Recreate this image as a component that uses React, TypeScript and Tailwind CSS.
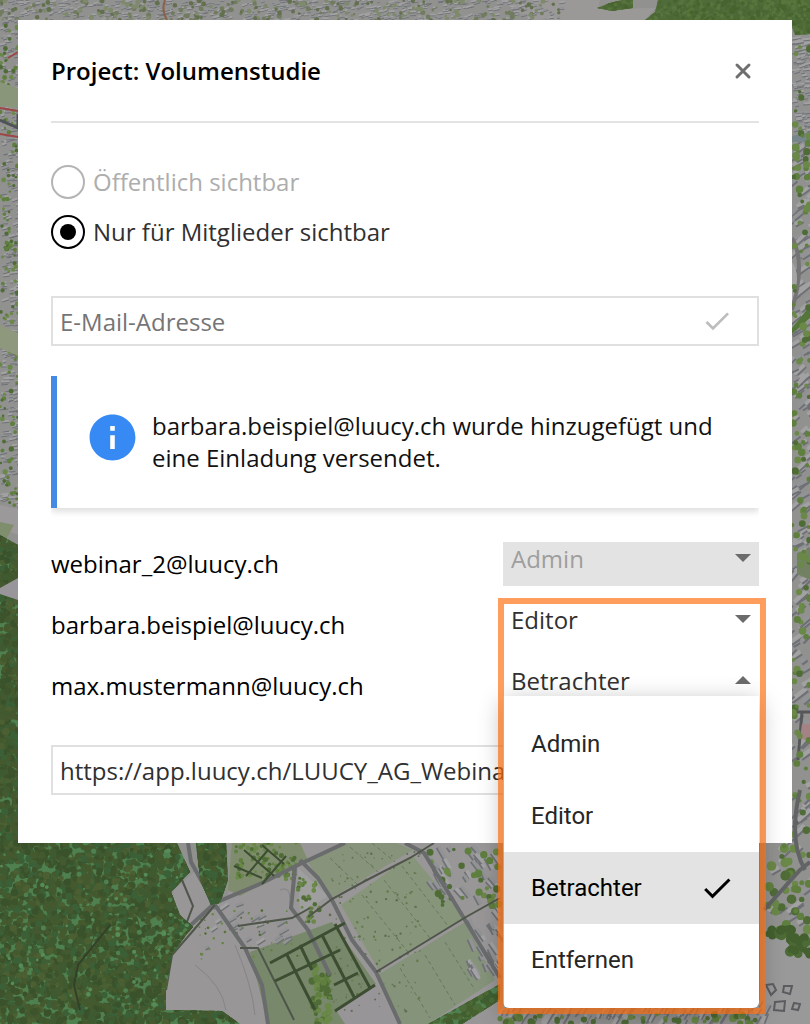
import { useState } from "react";
import { MdCheck, MdInfo } from "react-icons/md";

const ROLES = ["Admin", "Editor", "Betrachter", "Entfernen"];

const MEMBERS = [
  { email: "webinar_2@luucy.ch", role: "Admin", disabled: true },
  { email: "barbara.beispiel@luucy.ch", role: "Editor", disabled: false },
  { email: "max.mustermann@luucy.ch", role: "Betrachter", disabled: false, open: true },
];

// seeded random numbers, so that the map looks the same on every render
function createRandom(seed: number) {
  let s = seed;
  return () => {
    s = (s * 16807) % 2147483647;
    return s / 2147483647;
  };
}

type AreaProps = { x: number; y: number; w: number; h: number; count: number; seed: number };

function Trees({ x, y, w, h, count, seed, r = 3, colors }: AreaProps & { r?: number; colors: string[] }) {
  const rnd = createRandom(seed);
  return (
    <g>
      {Array.from({ length: count }, (_, i) => (
        <circle
          key={i}
          cx={(x + rnd() * w).toFixed(1)}
          cy={(y + rnd() * h).toFixed(1)}
          r={(r * (0.6 + rnd() * 0.7)).toFixed(1)}
          fill={colors[Math.floor(rnd() * colors.length)]}
        />
      ))}
    </g>
  );
}

function Houses({ x, y, w, h, count, seed, size = 7, angle = -20 }: AreaProps & { size?: number; angle?: number }) {
  const rnd = createRandom(seed);
  return (
    <g>
      {Array.from({ length: count }, (_, i) => {
        const cx = Math.round(x + rnd() * w);
        const cy = Math.round(y + rnd() * h);
        const len = size * (0.5 + rnd());
        // the dark bar is the shadow, the light one the roof
        return (
          <g key={i} transform={`translate(${cx} ${cy}) rotate(${Math.round(angle + rnd() * 20)})`}>
            <rect width={len} height={size / 4} fill="#6e7075" />
            <rect y={-size / 4} width={len} height={size / 3} fill={rnd() > 0.5 ? "#a2a2a3" : "#929394"} />
          </g>
        );
      })}
    </g>
  );
}

const FOREST = ["#3d532b", "#445a2e", "#4b5f32", "#3f5a30", "#3a522c", "#44592f", "#3b6038"];
const LEAVES = ["#5f7f3f", "#6a8848", "#4f6c37"];

function MapBackground() {
  return (
    <svg
      className="absolute inset-0 h-full w-full"
      viewBox="0 0 810 1024"
      preserveAspectRatio="xMidYMin slice"
      aria-hidden="true"
    >
      <defs>
        <clipPath id="forest">
          <path d="M0 535 18 545V843H177L190 872 171 892 180 915 193 927 186 935 172 955 166 990V1010L222 1011 240 1024H0Z" />
          <path d="M196 843H226L228 880 220 903 211 905 200 880Z" />
          <path d="M428 1024 500 984V1000L462 1024Z" />
        </clipPath>
        <clipPath id="wood">
          <path d="M645 20 655 12 658 0H810V34L795 35 790 20Z" />
          <path d="M597 8 610 3 622 0H633V8L612 11Z" />
        </clipPath>
      </defs>
      <rect width="810" height="1024" fill="#919190" />

      {/* town along the top */}
      <path d="M500 0 600 0 598 9 655 8 645 20H530Z" fill="#9b9898" />
      <Houses x={0} y={0} w={560} h={22} count={620} seed={11} size={5} />
      <Trees x={0} y={0} w={560} h={22} count={240} seed={5} r={2} colors={["#717c5f", "#62704e", "#7f8a6c"]} />
      <path d="M165 0Q161 10 167 20" stroke="#8c6048" strokeWidth="2" fill="none" />
      <g clipPath="url(#wood)">
        <rect x="590" width="220" height="40" fill="#506c39" />
        <Trees x={590} y={0} w={220} h={40} count={900} seed={7} r={2} colors={["#47642f", "#59753e", "#4c6835"]} />
      </g>

      {/* left edge */}
      <Houses x={0} y={20} w={18} h={510} count={330} seed={21} size={6} />
      <Trees x={0} y={20} w={18} h={500} count={150} seed={9} r={2} colors={LEAVES} />
      <path d="M0 82 18 88V108L0 106Z" fill="#89967a" />
      <path d="M0 108 18 111M0 134 18 137M8 58 18 52" stroke="#9e4645" strokeWidth="2" />
      <path d="M0 120 18 128 18 114" stroke="#50535a" strokeWidth="3" fill="none" />
      <path d="M0 325 18 333V356L0 348Z" fill="#8d987c" />
      <path d="M0 505 18 509V535L0 528Z" fill="#9b9999" />
      <path d="M0 522 14 525 4 543H0Z" fill="#7f8f6d" />

      {/* right edge */}
      <Houses x={792} y={36} w={18} h={100} count={110} seed={31} size={6} />
      <Houses x={788} y={136} w={22} h={420} count={150} seed={32} size={11} angle={-45} />
      <Houses x={768} y={560} w={42} h={380} count={90} seed={33} size={13} angle={-50} />
      <path d="M792 136 810 132V142H792Z" fill="#76868b" />
      <path d="M792 238Q806 262 792 310" stroke="#747476" strokeWidth="4" fill="none" />
      <path d="M792 262Q802 275 792 300Z" fill="#a5a5a5" />
      <path d="M792 328 810 306V318L792 334Z" fill="#55763a" />
      <path d="M797 553 810 548V580L797 574Z" fill="#718162" />
      <path d="M792 712H810M802 712 798 760" stroke="#55575b" strokeWidth="3" />
      <path d="M802 724H810V742L800 738Z" fill="#a38383" />
      <Trees x={792} y={36} w={18} h={800} count={130} seed={34} r={3} colors={LEAVES} />
      <Trees x={768} y={845} w={42} h={100} count={40} seed={35} r={4} colors={LEAVES} />
      <path d="M764 910 800 870 810 862M800 790Q788 840 805 870" stroke="#626365" strokeWidth="4" fill="none" />
      <path d="M760 935Q785 925 797 948L810 960V1024H760Z" fill="#9a999a" />
      <Trees x={768} y={928} w={24} h={8} count={16} seed={36} r={4} colors={["#44602f", "#4c6b36"]} />
      <Trees x={790} y={936} w={20} h={18} count={28} seed={37} r={4} colors={["#44602f", "#4c6b36"]} />
      <g fill="none" stroke="#5b5c60" strokeWidth="2">
        <path d="M766 985 773 984 776 990 771 995ZM784 986 792 986 790 994 783 992ZM775 1002 785 1001 784 1011 774 1010ZM794 1003 800 1004 798 1010 792 1009Z" />
      </g>

      {/* open land below the forest */}
      <path d="M174 890 196 870 235 843H500V1024H160Z" fill="#989696" />
      <path d="M188 843H238L228 895 214 905Z" fill="#8e918c" />
      <path d="M228 890 232 843H300L308 860 240 896Z" fill="#7f8d6e" />
      <path d="M308 862 345 843H396L413 850 331 898Z" fill="#87937a" />
      <path d="M341 905 412 855 464 918 378 969Z" fill="#87967a" />
      <path d="M378 975 465 922 495 980 428 1024H398Z" fill="#85937a" />
      <path d="M250 952 332 922 376 984 336 1010 350 1024H268Z" fill="#78886a" />
      <path d="M336 1010 377 986 396 1024H345Z" fill="#979597" />
      <path d="M298 868 328 896 300 914Z" fill="#a09f9f" />
      <g stroke="#6a7661" strokeWidth="1" strokeDasharray="4 3">
        <path d="M330 858 358 885M350 847 378 872M372 843 395 862M362 895 408 952M384 880 430 938M402 866 448 926M400 968 430 1018M425 955 455 1005M445 942 475 990" />
      </g>
      <Trees x={330} y={850} w={90} h={165} count={150} seed={41} r={1} colors={["#667a4f", "#5d6f50"]} />

      <Houses x={428} y={846} w={68} h={50} count={35} seed={51} size={10} angle={45} />
      <Houses x={468} y={905} w={30} h={65} count={32} seed={52} size={10} angle={50} />
      <Houses x={205} y={905} w={85} h={45} count={24} seed={53} size={8} angle={-40} />
      <Trees x={430} y={846} w={70} h={60} count={35} seed={54} r={3} colors={LEAVES} />
      <Trees x={236} y={843} w={60} h={36} count={85} seed={55} r={2} colors={LEAVES} />
      <Trees x={195} y={910} w={110} h={50} count={50} seed={56} r={1} colors={LEAVES} />
      <Trees x={298} y={878} w={22} h={45} count={35} seed={57} r={2} colors={LEAVES} />
      <Trees x={312} y={965} w={18} h={59} count={50} seed={58} r={3} colors={LEAVES} />

      <g fill="none" stroke="#696b6d" strokeWidth="4">
        <path d="M188 843 191 862 215 905 245 948 262 985 268 1024" />
        <path d="M180 935 215 903 260 884 300 864 345 843" />
        <path d="M300 860 318 878 332 900 352 940 376 972 400 1024" />
        <path d="M405 843 424 853 462 915 500 978" />
        <path d="M295 868 291 908 308 930 330 975" />
      </g>
      <g fill="none" stroke="#4f554a" strokeWidth="2">
        <path d="M308 917 332 899 365 881 410 858 434 843" />
        <path d="M376 972 412 950 466 917 500 898" />
        <path d="M238 926 292 918 310 908M240 948H258L294 1020M215 905 192 932 172 955 166 990" />
        <path d="M182 880 193 906 180 940" />
      </g>
      <g fill="none" stroke="#3c4d31" strokeWidth="3">
        <path d="M270 963 345 923M275 981 340 950M335 924 370 988M322 935 354 997M300 945 312 970M286 953 315 1010M334 985 358 973M335 1011 375 985" />
        <path d="M234 866 262 878M244 850 274 876M262 845 284 864M246 876 268 850M262 884 286 856" strokeWidth="2" />
      </g>
      <g fill="none" stroke="#858486" strokeWidth="1">
        <path d="M195 965Q222 985 226 1010M235 945Q252 985 255 1015M280 890Q290 885 290 900" />
      </g>

      <g clipPath="url(#forest)">
        <rect y="530" width="500" height="494" fill="#4f8150" />
        <Trees x={0} y={530} w={20} h={320} count={750} seed={61} colors={FOREST} />
        <Trees x={0} y={843} w={242} h={181} count={3600} seed={62} colors={FOREST} />
        <Trees x={0} y={850} w={190} h={170} count={90} seed={64} r={2} colors={["#568c57", "#4f8150"]} />
        <Trees x={425} y={980} w={75} h={44} count={240} seed={63} colors={["#46602f", "#4d6b38", "#3f5f31"]} />
      </g>
      <path d="M110 925 78 965 74 985 80 1010" fill="none" stroke="#33402a" strokeWidth="2" />
      <path d="M0 588 18 578V600L0 594Z" fill="#98969a" />

      <Houses x={500} y={1010} w={270} h={16} count={90} seed={71} size={10} angle={-70} />
      <Trees x={500} y={1014} w={260} h={10} count={45} seed={72} r={3} colors={LEAVES} />
    </svg>
  );
}

function CloseIcon() {
  return (
    <svg className="size-6" viewBox="0 0 24 24" fill="none" stroke="currentColor" strokeWidth="3" strokeLinecap="round" aria-hidden="true">
      <path d="M6 6l12 12M18 6 6 18" />
    </svg>
  );
}

function Caret({ up = false }: { up?: boolean }) {
  return (
    <svg
      className="pointer-events-none absolute top-3 right-2 h-2 w-4 fill-[#6b6b6b]"
      viewBox="0 0 16 8"
      aria-hidden="true"
    >
      <path d={up ? "M0 8 8 0l8 8z" : "M0 0h16L8 8z"} />
    </svg>
  );
}

function RoleMenu({ value, onSelect }: { value: string; onSelect: (role: string) => void }) {
  return (
    <div className="absolute inset-x-0 top-8 rounded-b-md bg-white py-3 font-[Roboto,sans-serif] shadow-[0_6px_24px_rgba(0,0,0,0.3)]">
      {ROLES.map((role) => (
        <button
          key={role}
          type="button"
          onClick={() => onSelect(role)}
          className={
            role === value
              ? "flex h-18 w-full items-center justify-between bg-[#e3e3e3] pr-6 pl-7 text-black"
              : "flex h-18 w-full items-center pr-6 pl-7 text-[#262626]"
          }
        >
          {role}
          {role === value && <MdCheck className="size-9" stroke="currentColor" />}
        </button>
      ))}
    </div>
  );
}

export default function App() {
  const [visibility, setVisibility] = useState("members");
  const [roles, setRoles] = useState(MEMBERS.map((m) => m.role));

  const changeRole = (index: number, role: string) => {
    setRoles(roles.map((r, i) => (i === index ? role : r)));
  };

  return (
    <div className="relative min-h-screen overflow-hidden px-[18px] pt-5 font-['Open_Sans',sans-serif] text-2xl text-black">
      <MapBackground />

      <main className="relative bg-white px-[33px] pb-12">
        <header className="flex h-[103px] items-center justify-between border-b-2 border-[#e3e3e3]">
          <h1 className="font-semibold">Project: Volumenstudie</h1>
          <button type="button" aria-label="Schliessen" className="pr-1 text-[#6f6f6f]">
            <CloseIcon />
          </button>
        </header>

        <fieldset className="mt-[42px] space-y-4">
          <label className="flex items-center gap-2 text-[#adadad]">
            <input
              type="radio"
              name="visibility"
              disabled
              className="size-[34px] appearance-none rounded-full border-2 border-[#b4b4b4]"
            />
            Öffentlich sichtbar
          </label>
          <label className="flex items-center gap-2 text-[#303030]">
            <input
              type="radio"
              name="visibility"
              checked={visibility === "members"}
              onChange={() => setVisibility("members")}
              className="grid size-[34px] appearance-none place-content-center rounded-full border-2 border-black before:size-4 before:rounded-full checked:before:bg-black"
            />
            Nur für Mitglieder sichtbar
          </label>
        </fieldset>

        <div className="mt-[47px] flex h-[50px] items-center border-2 border-[#e0e0e0] pr-6">
          <input
            type="email"
            aria-label="E-Mail-Adresse"
            placeholder="E-Mail-Adresse"
            className="h-full min-w-0 flex-1 px-[7px] placeholder:text-[#757575] focus:outline-none"
          />
          <button type="button" aria-label="Hinzufügen" className="text-[#bdbdbd]">
            <MdCheck className="size-8" stroke="currentColor" />
          </button>
        </div>

        <div className="mt-[30px] overflow-hidden pb-3">
          <div role="status" className="flex border-l-6 border-[#4489e4] py-[34px] pl-7 shadow-[0_4px_6px_rgba(0,0,0,0.12)]">
            <MdInfo className="size-[55px] shrink-0 text-[#378af3]" />
            <p className="pl-3 leading-8 text-[#111]">
              barbara.beispiel@luucy.ch wurde hinzugefügt und eine Einladung versendet.
            </p>
          </div>
        </div>

        <ul className="relative z-10 mt-[22px] space-y-[17px]">
          {MEMBERS.map((member, i) => (
            <li key={member.email} className="flex h-11 items-center justify-between">
              <label htmlFor={`role-${i}`}>{member.email}</label>
              <div className="relative h-11 w-64">
                <select
                  id={`role-${i}`}
                  value={roles[i]}
                  disabled={member.disabled}
                  onChange={(e) => changeRole(i, e.target.value)}
                  className="h-full w-full appearance-none px-2 pb-[10px] text-[#303030] opacity-100 focus:outline-none disabled:bg-[#e3e3e3] disabled:text-[#9e9e9e]"
                >
                  {ROLES.map((role) => (
                    <option key={role}>{role}</option>
                  ))}
                </select>
                <Caret up={member.open} />
                {member.open && <RoleMenu value={roles[i]} onSelect={(role) => changeRole(i, role)} />}
              </div>
            </li>
          ))}
          {/* highlight around the editable roles */}
          <li
            aria-hidden="true"
            className="pointer-events-none absolute top-14 -right-[7px] h-[416px] w-[268px] border-6 border-[#ff6f0f]/68"
          />
        </ul>

        <input
          type="text"
          readOnly
          aria-label="Link zum Projekt"
          value="https://app.luucy.ch/LUUCY_AG_Webinar/Volumenstudie"
          className="mt-[37px] block h-[50px] w-full border-2 border-[#e0e0e0] px-[7px] text-[#303030] focus:outline-none"
        />
      </main>
    </div>
  );
}
